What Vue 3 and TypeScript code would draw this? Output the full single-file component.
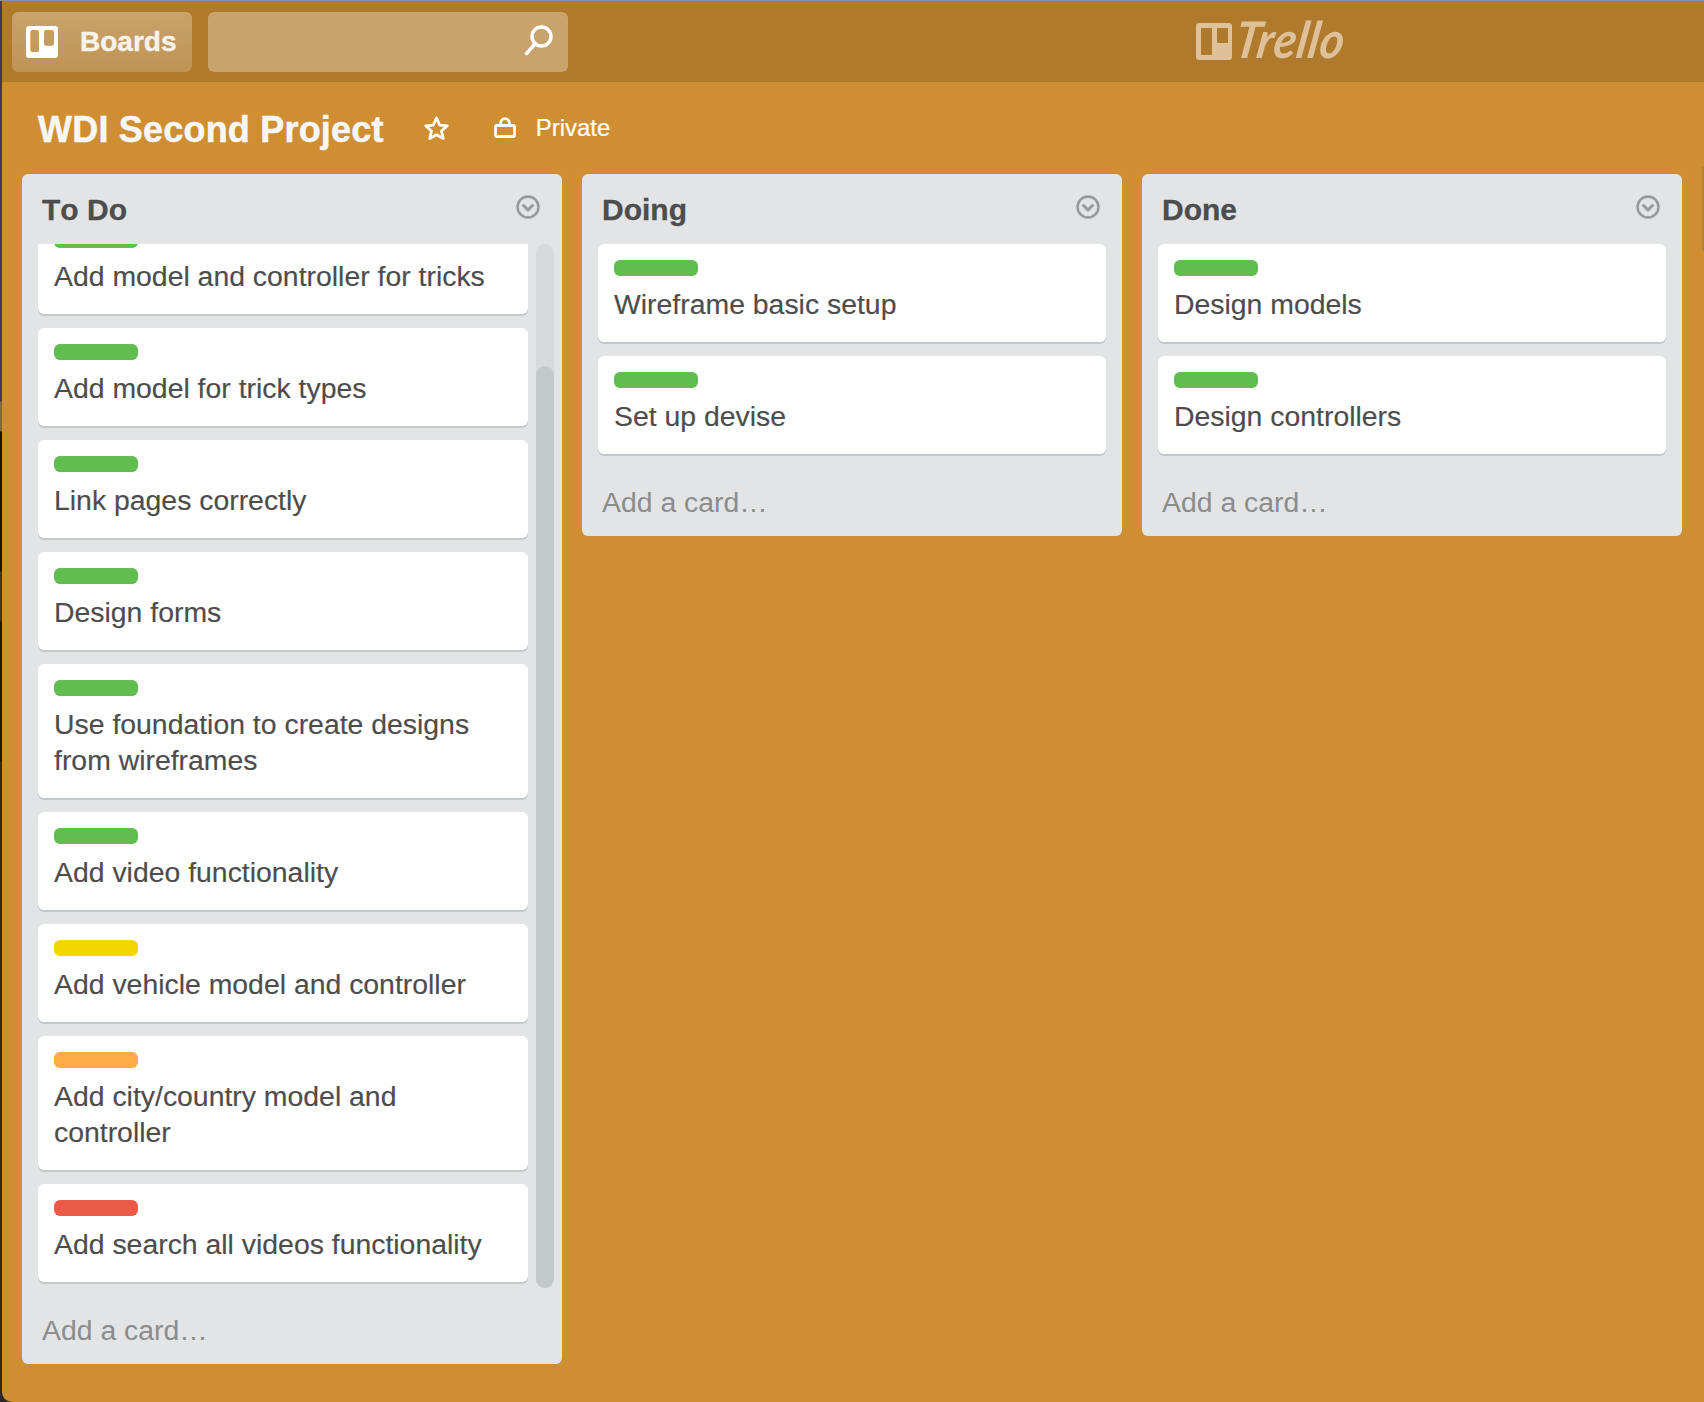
<template>
  <div class="screen">
    <div class="board">
      <header class="topbar">
        <button class="boards-btn">
          <svg class="boards-icon" width="32" height="32" viewBox="0 0 32 32">
            <path fill="#fff" fill-rule="evenodd" d="M3 0h26a3 3 0 0 1 3 3v26a3 3 0 0 1-3 3H3a3 3 0 0 1-3-3V3a3 3 0 0 1 3-3zM6.300 4a2 2 0 0 0-2 2v18a2 2 0 0 0 2 2h4.700a2 2 0 0 0 2-2V6a2 2 0 0 0-2-2zM20 4a2 2 0 0 0-2 2v11.700a2 2 0 0 0 2 2h6a2 2 0 0 0 2-2V6a2 2 0 0 0-2-2z" />
          </svg>
          <span>Boards</span>
        </button>
        <div class="search">
          <svg width="32" height="32" viewBox="0 0 32 32" fill="none" stroke="#fff" stroke-width="3.4" stroke-linecap="round">
            <circle cx="19.5" cy="12.5" r="9.5" />
            <path d="M12.5 20.5 4.500 29.500" />
          </svg>
        </div>
        <div class="logo">
          <svg width="36" height="37" viewBox="0 0 36 37">
            <path fill="#dfc199" fill-rule="evenodd" d="M3 0h30a3 3 0 0 1 3 3v31a3 3 0 0 1-3 3H3a3 3 0 0 1-3-3V3a3 3 0 0 1 3-3zM5 5v27h11V5zM21 5v15h11V5z" />
          </svg>
          <span class="logo-word">Trello</span>
        </div>
      </header>

      <div class="board-head">
        <h1 class="board-title">WDI Second Project</h1>
        <svg class="star" width="25" height="25" viewBox="0 0 24 24" fill="none" stroke="#fff" stroke-width="2.6" stroke-linejoin="round">
          <path d="M12 1.800l3 6.900 7.400.7-5.600 4.900 1.700 7.300L12 18l-6.500 3.600 1.700-7.300-5.600-4.900L9 8.700z" />
        </svg>
        <svg class="lock" width="22" height="21" viewBox="0 0 22 21" fill="none" stroke="#fff" stroke-width="2.8" stroke-linejoin="round">
          <rect x="1.500" y="8.500" width="19" height="11" rx="1.500" />
          <path d="M6.600 8.500V6a4.400 4.400 0 0 1 8.800 0v2.500" />
        </svg>
        <span class="privacy">Private</span>
      </div>

      <main class="lists">
        <section v-for="list in lists" :key="list.name" class="list">
          <div class="list-head">
            <h2>{{ list.name }}</h2>
            <svg width="24" height="24" viewBox="0 0 24 24" fill="none" stroke="#999" stroke-width="2.5">
              <circle cx="12" cy="12" r="10.500" />
              <path d="M7.500 10.500 12 15l4.500-4.500" stroke-width="3" stroke-linecap="round" stroke-linejoin="round" />
            </svg>
          </div>
          <div class="list-body" :class="{ scrolling: list.scrolled }">
            <div class="cards">
              <article v-for="card in list.cards" :key="card.text" class="card">
                <span class="label" :class="card.label"></span>
                <p>{{ card.text }}</p>
              </article>
            </div>
            <div v-if="list.scrolled" class="scroll-track">
              <div class="scroll-thumb"></div>
            </div>
          </div>
          <div class="add-card">Add a card…</div>
        </section>
      </main>

      <div class="next-edge"></div>
    </div>
  </div>
</template>

<script setup lang="ts">
interface Card {
  text: string;
  label: 'green' | 'yellow' | 'orange' | 'red';
}

interface List {
  name: string;
  scrolled: boolean;
  cards: Card[];
}

const lists: List[] = [
  {
    name: 'To Do',
    scrolled: true,
    cards: [
      { text: 'Add model and controller for tricks', label: 'green' },
      { text: 'Add model for trick types', label: 'green' },
      { text: 'Link pages correctly', label: 'green' },
      { text: 'Design forms', label: 'green' },
      { text: 'Use foundation to create designs from wireframes', label: 'green' },
      { text: 'Add video functionality', label: 'green' },
      { text: 'Add vehicle model and controller', label: 'yellow' },
      { text: 'Add city/country model and controller', label: 'orange' },
      { text: 'Add search all videos functionality', label: 'red' },
    ],
  },
  {
    name: 'Doing',
    scrolled: false,
    cards: [
      { text: 'Wireframe basic setup', label: 'green' },
      { text: 'Set up devise', label: 'green' },
    ],
  },
  {
    name: 'Done',
    scrolled: false,
    cards: [
      { text: 'Design models', label: 'green' },
      { text: 'Design controllers', label: 'green' },
    ],
  },
];
</script>

<style>
body {
  background: #2a2226;
}
</style>

<style scoped>
.screen {
  width: 1704px;
  height: 1402px;
  box-sizing: border-box;
  padding-left: 2px;
  border-top: 1px solid #8b90a0;
  background: linear-gradient(to bottom, #4a2f6b 0, #4a2f6b 400px, #7d6455 401px, #7d6455 430px, #17110f 431px, #17110f 570px, #3b3139 571px, #3b3139 620px, #1b1513 621px, #1b1513 760px, #2e2628 761px);
  font-family: "Liberation Sans", Arial, sans-serif;
}

.board {
  position: relative;
  height: 100%;
  background: #d08e33;
  border-bottom-left-radius: 10px;
  overflow: hidden;
}

.topbar {
  height: 81px;
  box-sizing: border-box;
  padding: 11px 0 0 10px;
  display: flex;
  align-items: flex-start;
  background: #b07a2c;
}

.boards-btn {
  width: 180px;
  height: 60px;
  box-sizing: border-box;
  padding: 0 0 0 14px;
  border: 0;
  border-radius: 6px;
  display: flex;
  align-items: center;
  gap: 22px;
  background: linear-gradient(to bottom, #c9a36c, #bf9353);
  color: #f8f3ea;
  font: bold 28px "Liberation Sans", Arial, sans-serif;
  -webkit-text-stroke: 0.4px #f8f3ea;
}

.search {
  width: 360px;
  height: 60px;
  margin-left: 16px;
  box-sizing: border-box;
  padding: 0 14px 4px 0;
  border-radius: 6px;
  display: flex;
  align-items: center;
  justify-content: flex-end;
  background: #c9a36c;
}

.logo {
  margin: 11px 0 0 628px;
  display: flex;
  align-items: center;
  gap: 4px;
}

.logo-word {
  display: inline-block;
  margin-top: -6px;
  font: italic 700 46px/40px Lato, "Liberation Sans", sans-serif;
  color: #dfc199;
  letter-spacing: 0.6px;
  transform: scaleY(1.1) skewX(-10deg);
}

.board-head {
  height: 92px;
  padding-left: 36px;
  display: flex;
  align-items: center;
  color: #fff;
}

.board-title {
  margin: 4px 0 0;
  font-size: 36px;
  font-weight: bold;
  letter-spacing: 0.2px;
  color: #f7f7f7;
  -webkit-text-stroke: 0.5px #f7f7f7;
}

.star {
  margin-left: 40px;
}

.lock {
  margin: 0 0 2px 45px;
}

.privacy {
  margin-left: 20px;
  font-size: 24px;
  -webkit-text-stroke: 0.2px #fff;
}

.lists {
  padding-left: 20px;
  display: flex;
  align-items: flex-start;
  gap: 20px;
}

.list {
  width: 540px;
  box-sizing: border-box;
  padding-bottom: 16px;
  border-radius: 6px;
  background: #e2e4e6;
}

.list-head {
  height: 70px;
  box-sizing: border-box;
  padding: 18px 22px 0 20px;
  display: flex;
  justify-content: space-between;
  align-items: flex-start;
}

.list-head h2 {
  margin: 0;
  font-size: 30px;
  line-height: 36px;
  font-weight: bold;
  font-kerning: none;
  color: #4d4d4d;
  -webkit-text-stroke: 0.3px #4d4d4d;
}

.list-head svg {
  margin-top: 3px;
}

.list-body {
  display: flex;
  gap: 8px;
  padding: 0 16px;
}

.list-body.scrolling {
  padding-right: 8px;
}

.cards {
  flex: 1;
  min-width: 0;
  overflow: hidden;
}

.scrolling .card:first-child {
  margin-top: -28px;
}

.card {
  margin-bottom: 14px;
  padding: 16px 16px 20px;
  border-radius: 6px;
  background: #fff;
  box-shadow: 0 2px 0 #c4c9cc;
}

.label {
  display: block;
  width: 84px;
  height: 16px;
  margin-bottom: 10px;
  border-radius: 6px;
}

.green {
  background: #61bd4f;
}

.yellow {
  background: #f2d600;
}

.orange {
  background: #ffab4a;
}

.red {
  background: #eb5a46;
}

.card p {
  margin: 0;
  font-size: 28.4px;
  line-height: 36px;
  color: #4d4d4d;
  -webkit-text-stroke: 0.15px #4d4d4d;
}

.scroll-track {
  width: 18px;
  margin-bottom: 8px;
  padding-top: 122px;
  box-sizing: border-box;
  display: flex;
  border-radius: 9px;
  background: #d6dadc;
}

.scroll-thumb {
  flex: 1;
  border-radius: 9px;
  background: #c3c9cb;
}

.add-card {
  margin: 16px 0 0 20px;
  font-size: 28.4px;
  line-height: 36px;
  color: #8c8c8c;
}

.next-edge {
  position: absolute;
  top: 166px;
  right: 0;
  width: 2px;
  height: 84px;
  background: #b8822f;
}
</style>
